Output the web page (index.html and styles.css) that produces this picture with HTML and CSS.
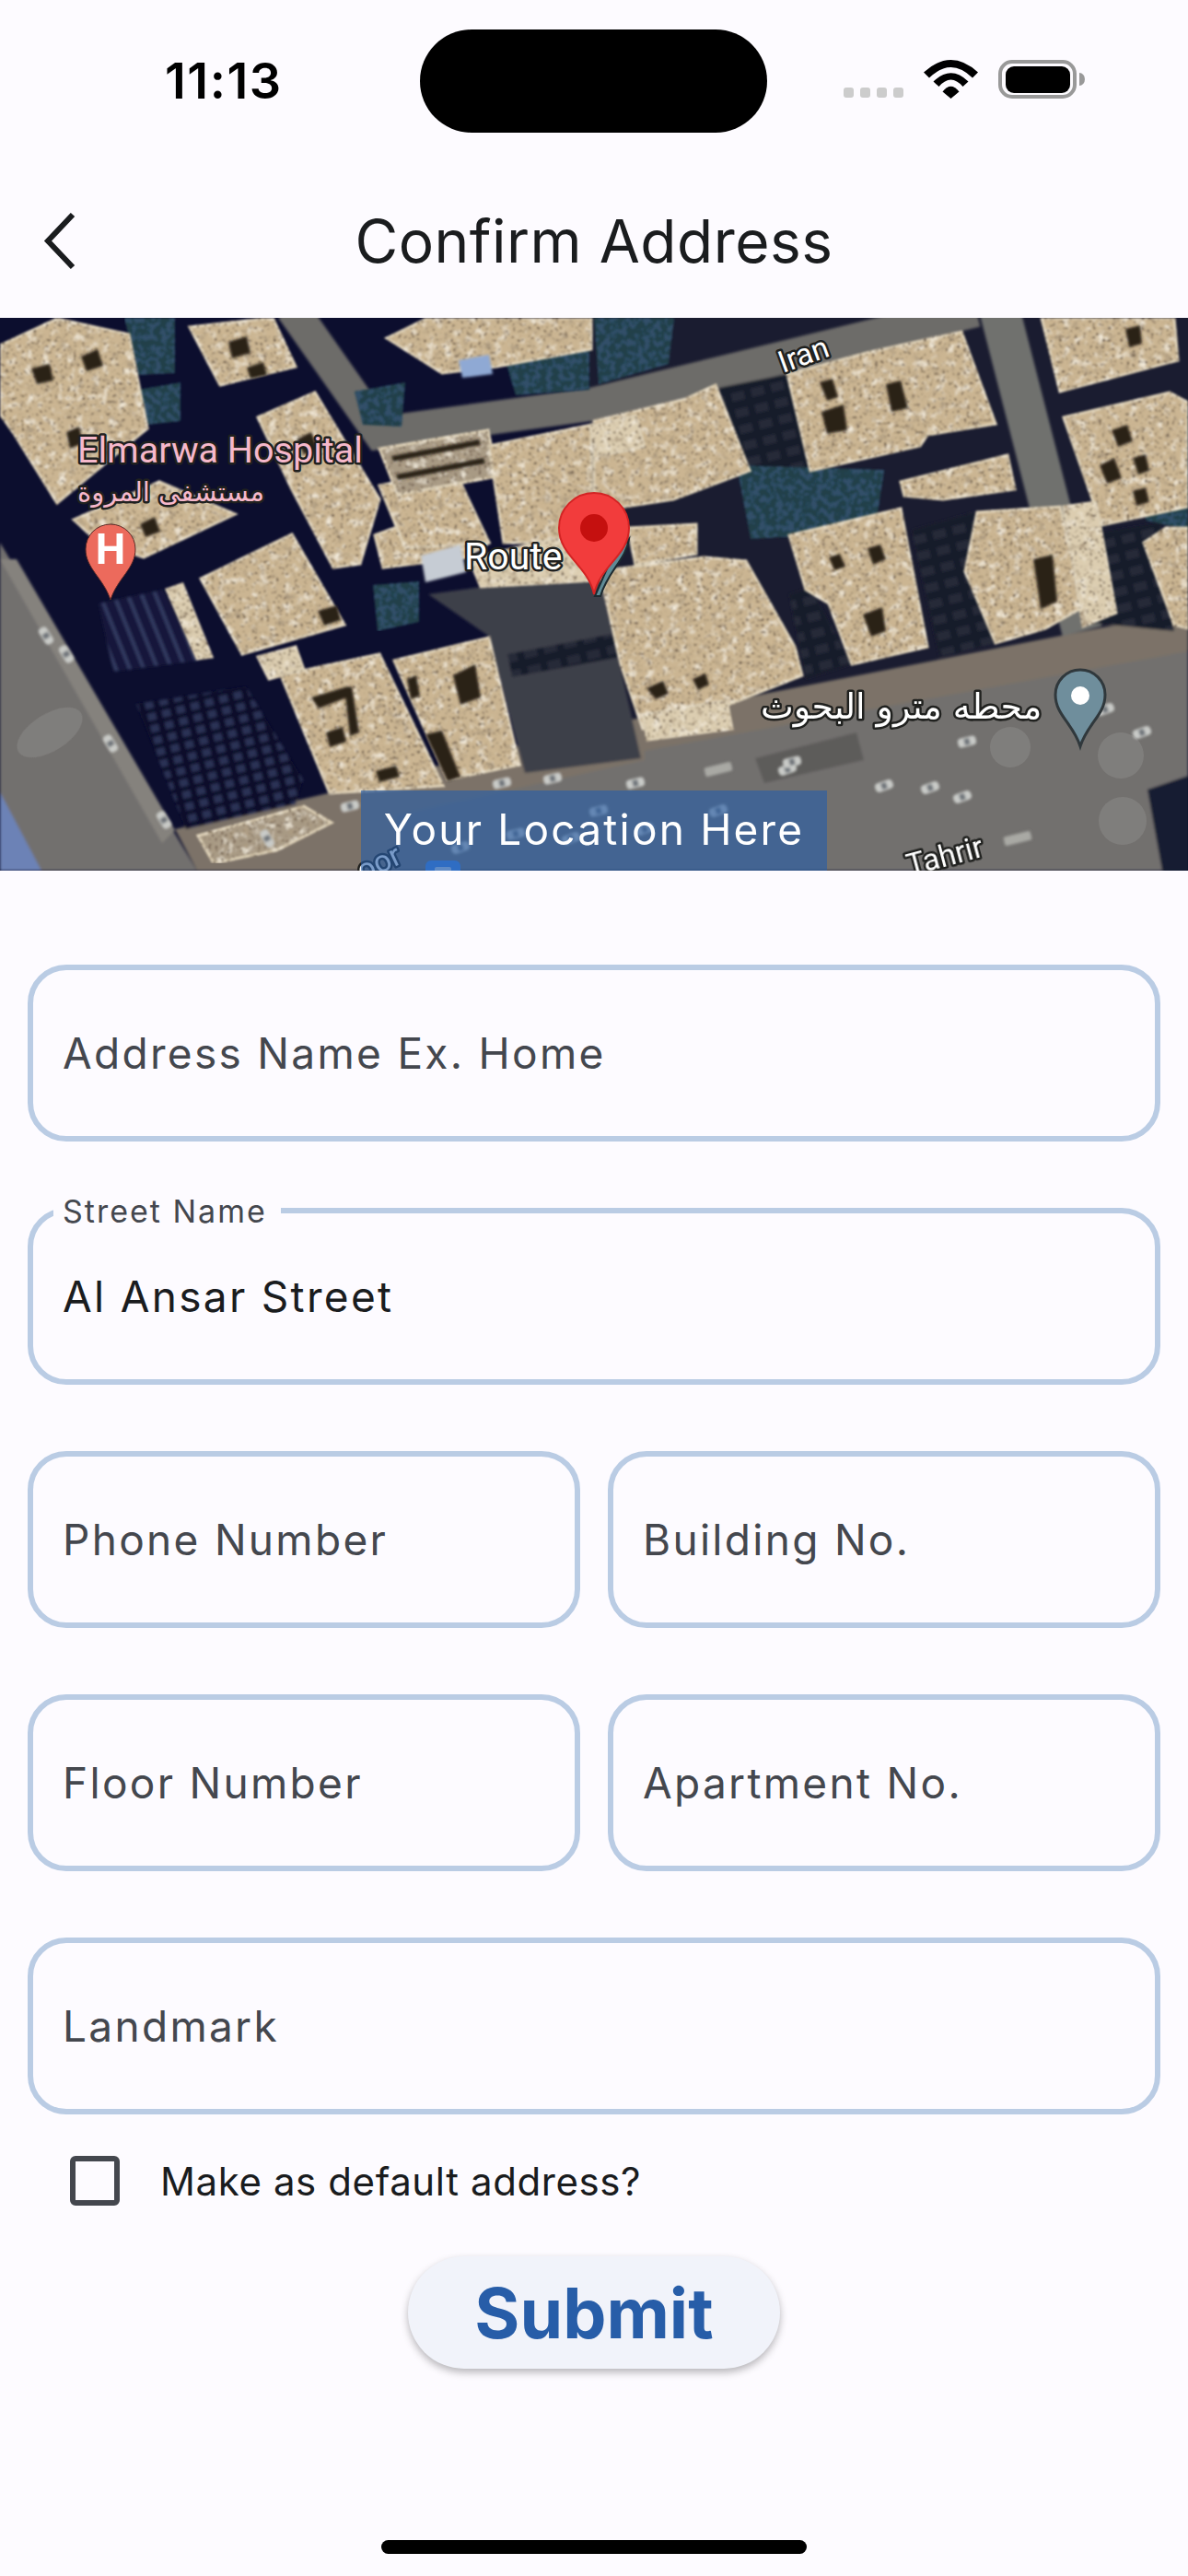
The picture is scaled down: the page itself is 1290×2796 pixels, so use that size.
FILE: index.html
```html
<!DOCTYPE html>
<html lang="en">
<head>
<meta charset="utf-8">
<title>Confirm Address</title>
<link rel="stylesheet" href="styles.css">
</head>
<body>
<main class="screen">
  <header class="status">
    <div class="time">11:13</div>
    <div class="island"></div>
    <div class="status-icons">
      <div class="signal"><i></i><i></i><i></i><i></i></div>
      <svg class="wifi" width="59" height="42" viewBox="0 0 59 42"><path d="M0 13.5Q29.5-13.5 59 13.5L53 19.5Q29.5-3.500 6 19.5Z"/><path d="M10.500 23.500Q29.500 5 48.500 23.500L42.500 29Q29.500 14 16.500 29Z"/><path d="M20.500 34.500Q29.500 23 38.500 34.500L29.500 42Z"/></svg>
      <svg class="battery" width="94" height="42" viewBox="0 0 94 42"><rect x="2" y="2" width="81" height="38" rx="13" class="bat-line"/><rect x="8" y="7" width="70" height="29" rx="9"/><path class="bat-cap" d="M88 14a6 7 0 0 1 6 7a6 7 0 0 1-6 7Z"/></svg>
    </div>
  </header>

  <nav class="bar">
    <svg class="back" width="40" height="62" viewBox="0 0 40 62"><path d="M33 2 6 30.500 33 59" class="back-line"/></svg>
    <h1 class="title">Confirm Address</h1>
    <span></span>
  </nav>

  <section class="map">
    <svg class="map-art" width="1290" height="600" viewBox="0 0 1290 600">
      <defs>
        <filter id="roofTex" x="0" y="0" width="100%" height="100%">
          <feTurbulence type="fractalNoise" baseFrequency="0.11" numOctaves="4" seed="7" result="n"/>
          <feColorMatrix in="n" type="matrix" values="0 0 0 0 .42 0 0 0 0 .33 0 0 0 0 .22 4 0 0 0 -2.300" result="dark"/>
          <feComposite in="dark" in2="SourceGraphic" operator="in" result="shade"/>
          <feColorMatrix in="n" type="matrix" values="0 0 0 0 .9 0 0 0 0 .84 0 0 0 0 .72 0 3 0 0 -1.600" result="light"/>
          <feComposite in="light" in2="SourceGraphic" operator="in" result="glow"/>
          <feTurbulence type="fractalNoise" baseFrequency="0.3" numOctaves="2" seed="11" result="f"/>
          <feColorMatrix in="f" type="matrix" values="0 0 0 0 .16 0 0 0 0 .11 0 0 0 0 .07 16 0 0 0 -10.200" result="specks"/>
          <feComposite in="specks" in2="SourceGraphic" operator="in" result="dots"/>
          <feMerge result="m"><feMergeNode in="SourceGraphic"/><feMergeNode in="glow"/><feMergeNode in="shade"/><feMergeNode in="dots"/></feMerge>
          <feGaussianBlur in="m" stdDeviation="0.9"/>
        </filter>
        <filter id="soft"><feGaussianBlur stdDeviation="1.400"/></filter>
        <filter id="leaf" x="0" y="0" width="100%" height="100%">
          <feTurbulence type="fractalNoise" baseFrequency="0.16" numOctaves="3" seed="3" result="n"/>
          <feColorMatrix in="n" type="matrix" values="0 0 0 0 .03 0 0 0 0 .08 0 0 0 0 .14 9 0 0 0 -4.200" result="d"/>
          <feComposite in="d" in2="SourceGraphic" operator="in" result="s"/>
          <feMerge result="t"><feMergeNode in="SourceGraphic"/><feMergeNode in="s"/></feMerge>
          <feGaussianBlur in="t" stdDeviation="1"/>
        </filter>
        <pattern id="glassA" width="14" height="14" patternUnits="userSpaceOnUse" patternTransform="rotate(-22)"><rect width="14" height="14" fill="#12163a"/><rect width="4" height="14" fill="#333a60"/></pattern>
        <pattern id="glassB" width="16" height="13" patternUnits="userSpaceOnUse" patternTransform="rotate(-14)"><rect width="16" height="13" fill="#0c0f2c"/><rect y="1" width="9" height="8" x="3" fill="#2c3254"/></pattern>
        <pattern id="glassC" width="22" height="18" patternUnits="userSpaceOnUse" patternTransform="rotate(-14)"><rect width="22" height="18" fill="#191c2c"/><rect x="2" y="2" width="14" height="9" fill="#282b38"/></pattern>
        <g id="car"><rect x="-10" y="-5" width="20" height="10" rx="4" fill="#c9cbc8"/><rect x="-3" y="-3.500" width="6" height="7" fill="#70757a"/></g>
        <g id="van"><rect x="-15" y="-5" width="30" height="10" rx="2" fill="#a9a9a4"/></g>
      </defs>

      <rect width="1290" height="600" fill="#0c0e2e"/>
      <polygon class="shade-right" points="640,0 1290,0 1290,360 640,470"/>

      <g filter="url(#soft)">
        <polygon class="asphalt" points="0,244 214,600 0,600"/>
        <polygon class="curb" points="0,262 18,262 190,556 176,570"/>
        <polygon class="asphalt-dark" points="0,515 45,600 0,600"/>
        <polygon class="pave" points="214,600 190,555 360,515 640,445 1290,318 1290,600"/>
        <polygon class="asphalt" points="700,470 1290,362 1290,600 700,600"/>
        <polygon class="asphalt" points="430,540 700,480 700,600 430,600"/>
        <polygon class="strip" points="820,478 930,450 938,480 830,505"/>
        <polygon class="corner" points="1246,512 1290,497 1290,600 1262,600"/>
        <polyline class="road" points="317,-10 412,125 642,94 777,61 1060,-8"/>
        <polyline class="road road-r" points="1085,-10 1175,340"/>
        <polygon class="gloom" points="465,300 650,275 696,478 570,494 530,345"/>
        <polygon fill="url(#glassC)" points="551,365 690,338 696,364 556,390"/>
        <polygon fill="url(#glassC)" points="780,76 855,61 880,166 814,166"/>
        <polygon fill="url(#glassC)" points="857,300 880,292 925,376 875,392"/>
        <polygon fill="url(#glassC)" points="990,230 1060,210 1048,275 1081,353 1020,368"/>
        <polygon fill="url(#glassC)" points="1198,232 1260,222 1275,340 1176,330"/>
        <polygon fill="url(#glassA)" points="107,310 177,295 214,372 123,384"/>
        <polygon fill="url(#glassB)" points="148,419 267,400 329,501 321,528 202,555"/>
      </g>

      <g filter="url(#leaf)">
        <polygon class="tree" points="135,0 190,0 190,60 150,62"/>
        <polygon class="tree" points="150,78 196,70 196,112 160,116"/>
        <polygon class="tree" points="385,80 440,70 436,118 394,116"/>
        <polygon class="tree" points="548,44 640,30 640,78 560,84"/>
        <polygon class="tree" points="645,0 732,0 726,50 650,72"/>
        <polygon class="tree" points="800,160 960,165 950,232 815,240"/>
        <polygon class="tree" points="1215,130 1290,95 1290,230 1245,220"/>
        <polygon class="tree" points="405,290 455,286 455,330 410,340"/>
      </g>

      <g filter="url(#roofTex)">
        <polygon class="roof" points="0,30 62,1 140,18 160,120 62,201 16,127 0,104"/>
        <polygon class="roof" points="80,219 173,178 255,213 156,260 107,244"/>
        <polygon class="roof" points="206,10 296,0 321,53 239,73"/>
        <polygon class="roof" points="280,108 342,81 412,197 391,267 362,271 317,186"/>
        <polygon class="roof" points="218,283 317,235 374,333 263,365"/>
        <polygon class="roof pale" points="181,295 198,289 230,368 214,370"/>
        <polygon class="roof pale" points="280,368 321,357 330,382 292,392"/>
        <polygon class="roof" points="305,388 412,365 481,508 358,516"/>
        <polygon class="roof" points="428,372 531,347 564,485 486,501 461,446"/>
        <polygon class="roof" points="407,236 502,201 531,244 506,260 416,271"/>
        <polygon class="roof" points="412,182 494,166 531,244 440,250"/>
        <polygon class="roof stone" points="412,142 530,122 540,172 432,192"/>
        <polygon class="roof" points="420,22 465,0 642,0 642,34 539,53 480,60"/>
        <polygon class="roof" points="531,139 642,116 642,244 547,244"/>
        <polygon class="roof pale" points="510,262 600,240 645,246 645,285 522,292"/>
        <polygon class="roof stone" points="215,562 330,530 360,548 300,578 232,592"/>
        <polygon class="roof" points="645,112 744,88 777,73 814,166 731,197 645,210"/>
        <polygon class="roof" points="855,61 941,38 1044,15 1081,115 1007,127 999,139 880,166"/>
        <polygon class="roof" points="1131,0 1275,0 1279,46 1151,80"/>
        <polygon class="roof" points="1155,108 1270,81 1290,92 1290,205 1196,225"/>
        <polygon class="roof" points="978,178 1094,149 1102,186 1024,197 982,193"/>
        <polygon class="roof" points="857,236 978,207 1007,357 925,376 900,310 875,295"/>
        <polygon class="roof" points="1048,275 1061,211 1151,205 1176,314 1135,337 1081,353"/>
        <polygon class="roof" points="1242,244 1266,228 1290,228 1290,337 1275,333"/>
        <polygon class="roof" points="651,275 764,260 810,264 863,357 871,388 793,419 698,446 674,376"/>
        <polygon class="roof" points="682,228 756,224 756,256 690,268"/>
        <polygon class="roof pale" points="698,431 789,415 795,446 703,458"/>
        <polygon class="roof pale" points="1155,205 1190,200 1212,320 1176,335"/>
        <polygon class="roof pale" points="640,118 690,106 700,140 650,150"/>
      </g>

      <polygon class="metal" points="457,258 500,246 506,276 462,287" filter="url(#soft)"/>

      <g filter="url(#soft)" class="holes">
        <polygon points="34,55 54,50 58,68 40,72"/><polygon points="88,42 106,34 112,52 94,58"/>
        <polygon points="72,124 86,118 90,136 76,142"/><polygon points="248,26 268,20 272,38 252,44"/>
        <polygon points="268,54 286,48 290,62 272,66"/><polygon points="152,224 168,216 174,232 158,238"/>
        <polygon points="322,132 338,124 346,144 330,148"/><polygon points="345,318 366,312 370,328 352,334"/>
        <polygon points="338,412 378,400 382,410 346,424"/><polygon points="354,450 372,444 376,460 358,466"/>
        <polygon points="374,402 382,400 390,450 380,454"/><polygon points="442,392 452,388 456,410 446,414"/>
        <polygon points="492,388 516,376 522,412 500,420"/><polygon points="462,452 480,448 500,498 486,503"/>
        <polygon points="408,492 430,486 434,498 412,504"/><polygon points="890,70 904,66 910,86 898,90"/>
        <polygon points="892,102 916,94 920,122 898,126"/><polygon points="962,72 978,68 986,98 968,102"/>
        <polygon points="1222,12 1238,8 1240,28 1226,32"/><polygon points="1207,122 1224,116 1230,134 1214,140"/>
        <polygon points="1194,160 1210,152 1218,174 1202,180"/><polygon points="1230,152 1244,148 1248,166 1236,170"/>
        <polygon points="1230,188 1244,184 1248,200 1234,204"/><polygon points="900,260 912,256 918,270 906,274"/>
        <polygon points="942,250 956,246 962,262 948,268"/><polygon points="937,322 958,314 962,340 946,346"/>
        <polygon points="1122,262 1143,257 1148,308 1130,316"/><polygon points="702,402 720,394 726,408 712,414"/>
        <polygon points="752,392 766,386 770,398 758,404"/><polygon points="425,150 520,132 522,138 427,156"/>
        <polygon points="430,170 525,152 527,158 432,176"/>
      </g>

      <polygon class="pool" points="498,46 531,40 535,61 502,65" filter="url(#soft)"/>

      <g class="traffic" filter="url(#soft)">
        <use href="#car" transform="translate(72 365) rotate(58)"/><use href="#car" transform="translate(50 345) rotate(58)"/>
        <use href="#car" transform="translate(120 462) rotate(58)"/><use href="#car" transform="translate(178 545) rotate(58)"/>
        <use href="#car" transform="translate(960 508) rotate(-20)"/><use href="#car" transform="translate(1010 510) rotate(-20)"/>
        <use href="#car" transform="translate(1045 520) rotate(-20)"/><use href="#car" transform="translate(1200 425) rotate(-20)"/>
        <use href="#car" transform="translate(1240 450) rotate(-20)"/><use href="#car" transform="translate(855 490) rotate(-20)"/>
        <use href="#car" transform="translate(1050 460) rotate(-14)"/><use href="#car" transform="translate(860 482) rotate(-14)"/>
        <use href="#van" transform="translate(780 490) rotate(-14)"/><use href="#car" transform="translate(690 505) rotate(-14)"/>
        <use href="#car" transform="translate(545 505) rotate(-14)"/><use href="#car" transform="translate(600 500) rotate(-14)"/>
        <use href="#car" transform="translate(650 535) rotate(-14)"/><use href="#car" transform="translate(560 560) rotate(-14)"/>
        <use href="#car" transform="translate(620 565) rotate(-20)"/><use href="#car" transform="translate(700 555) rotate(-20)"/>
        <use href="#car" transform="translate(780 535) rotate(-20)"/><use href="#car" transform="translate(500 575) rotate(-20)"/>
        <use href="#van" transform="translate(1105 565) rotate(-14)"/>
        <use href="#car" transform="translate(380 530) rotate(-14)"/><use href="#car" transform="translate(290 565) rotate(60)"/>
      </g>

      <g class="blobs">
        <ellipse cx="54" cy="450" rx="40" ry="20" transform="rotate(-32 54 450)"/>
        <circle cx="1097" cy="466" r="22"/><circle cx="1217" cy="475" r="25"/><circle cx="1219" cy="546" r="26"/>
      </g>

      <text class="lbl pink en" x="84" y="157">Elmarwa Hospital</text>
      <text class="lbl pink ar-s" x="84" y="199">مستشفى المروة</text>
      <text class="lbl en route" x="504" y="273">Route</text>
      <text class="lbl en small" transform="translate(850 60) rotate(-20)">Iran</text>
      <text class="lbl ar" x="826" y="435">محطه مترو البحوث</text>
      <text class="lbl en small" transform="translate(988 606) rotate(-15)">Tahrir</text>
      <text class="lbl en small" transform="translate(394 612) rotate(-25)">oor</text>
      <rect class="transit" x="462" y="589" width="38" height="30" rx="6"/>
      <rect class="transit-in" x="472" y="596" width="18" height="12" rx="2"/>

      <g class="pin-h">
        <path class="pin-h-body" d="M120 306C112 282 93 272 93 251a27 27 0 0 1 54 0C147 272 128 282 120 306Z"/>
        <text class="pin-h-text" x="120" y="267">H</text>
      </g>
      <g>
        <path class="pin-g" d="M1173 465C1165 440 1146 431 1146 409a27 27 0 0 1 54 0C1200 431 1181 440 1173 465Z"/>
        <circle class="pin-g-dot" cx="1173" cy="410" r="10"/>
      </g>
      <g>
        <path class="pin-shadow" d="M683 240C680 262 660 275 652 302L646 302 660 270Z"/>
        <path class="pin-red" d="M645 300C638 268 607 258 607 228a38 38 0 0 1 76 0C683 258 652 268 645 300Z"/>
        <circle class="pin-dot" cx="645" cy="228" r="15"/>
      </g>
    </svg>
    <div class="map-tag">
      <span class="map-tag-text">Your Location Here</span>
    </div>
  </section>

  <form class="form">
    <div class="rows">
      <div class="field"><span class="hint">Address Name Ex. Home</span></div>
      <div class="field"><span class="field-label">Street Name</span><span class="value">Al Ansar Street</span></div>
      <div class="pair">
        <div class="field"><span class="hint">Phone Number</span></div>
        <div class="field"><span class="hint">Building No.</span></div>
      </div>
      <div class="pair">
        <div class="field"><span class="hint">Floor Number</span></div>
        <div class="field"><span class="hint">Apartment No.</span></div>
      </div>
      <div class="field"><span class="hint">Landmark</span></div>
    </div>
    <div class="check-row">
      <span class="check"></span>
      <span class="check-text">Make as default address?</span>
    </div>
    <button type="button" class="submit">Submit</button>
  </form>

  <div class="home"></div>
</main>
</body>
</html>
```
FILE: styles.css
```css
* { box-sizing: border-box; }
html, body { margin: 0; padding: 0; }
body { background: #fdfbff; font-family: Inter, "Liberation Sans", sans-serif; color: #1a1c1e; }

.screen { width: 1290px; height: 2796px; display: flex; flex-direction: column; overflow: hidden; }

/* status bar */
.status { display: grid; grid-template-columns: 456px 377px 1fr; height: 144px; padding-top: 32px; }
.time { padding-left: 179px; font-size: 54px; font-weight: 600; letter-spacing: 1.5px; line-height: 112px; color: #000; }
.island { background: #000; border-radius: 56px; height: 112px; }
.status-icons { display: flex; align-items: flex-end; padding: 0 0 5px 83px; height: 80px; }
.signal { display: flex; gap: 7px; margin-bottom: 1px; }
.signal i { width: 11px; height: 11px; border-radius: 3px; background: #cccccc; }
.wifi { margin-left: 22px; }
.battery { margin-left: 22px; }
.bat-line { fill: none; stroke: #999999; stroke-width: 4; }
.bat-cap { fill: #999999; }

/* nav */
.bar { display: grid; grid-template-columns: 1fr auto 1fr; align-items: center; height: 201px; padding-top: 34px; }
.back { margin-left: 46px; }
.back-line { fill: none; stroke: #1a1c1e; stroke-width: 6; }
.title { margin: 0; font-size: 64px; font-weight: 400; letter-spacing: 0.5px; line-height: 80px; color: #1a1c1e; }

/* map */
.map { position: relative; height: 600px; overflow: hidden; }
.map-art { display: block; }
.shade-right { fill: #1a1c30; }
.asphalt { fill: #72706e; }
.curb { fill: #85827d; }
.asphalt-dark { fill: #6c82b6; }
.pave { fill: #7b7268; }
.strip { fill: #5d5c5a; }
.corner { fill: #141a30; }
.road { fill: none; stroke: #6d6c69; stroke-width: 36; }
.road-r { stroke: #70716e; stroke-width: 44; }
.gloom { fill: #3e3f4a; }
.tree { fill: #24404a; }
.roof { fill: #cbb592; stroke: #dccfb5; stroke-width: 3; }
.pale { fill: #dccdb0; }
.stone { fill: #a89a84; }
.metal { fill: #c6ccd4; }
.holes polygon { fill: #2a2018; }
.pool { fill: #8fa9d4; }
.blobs { fill: #ffffff; opacity: 0.1; }
.transit { fill: #3d86f0; }
.transit-in { fill: #b9d2f5; }
.lbl { fill: #ffffff; stroke: #20211f; stroke-width: 5; paint-order: stroke; stroke-linejoin: round; }
.en { font-family: Roboto, "Liberation Sans", sans-serif; font-size: 39.5px; }
.route { font-size: 41px; }
.small { font-size: 33px; }
.ar { font-family: "DejaVu Sans", sans-serif; font-size: 38px; }
.ar-s { font-family: "DejaVu Sans", sans-serif; font-size: 29px; }
.pink { fill: #f6b8cb; }
.pin-h-body { fill: #ec6a5c; stroke: #5a2a26; stroke-width: 1; }
.pin-h-text { fill: #ffffff; font-family: Roboto, "Liberation Sans", sans-serif; font-weight: 700; font-size: 46px; text-anchor: middle; }
.pin-g { fill: #6f8e9c; stroke: #30383c; stroke-width: 3; }
.pin-g-dot { fill: #ffffff; }
.pin-shadow { fill: #5f8b96; stroke: #1d2a30; stroke-width: 2; }
.pin-red { fill: #f23c3c; stroke: #d32424; stroke-width: 2; }
.pin-dot { fill: #c5100f; }

.map-tag { position: absolute; left: 392px; bottom: 0; width: 506px; height: 87px; background: rgba(39, 93, 168, 0.62); display: flex; justify-content: center; padding-top: 12px; }
.map-tag-text { color: #ffffff; font-size: 46px; letter-spacing: 2.2px; line-height: 60px; }

/* form */
.form { display: flex; flex-direction: column; padding: 102px 30px 0; }
.rows { display: flex; flex-direction: column; gap: 72px; }
.pair { display: grid; grid-template-columns: 1fr 1fr; gap: 30px; }
.field { position: relative; height: 192px; border: 6px solid #bacce4; border-radius: 42px; display: flex; align-items: center; padding-left: 32px; font-size: 46px; letter-spacing: 2.3px; }
.hint { color: #44474e; }
.value { color: #1a1c1e; }
.field-label { position: absolute; left: 22px; top: -22px; padding: 0 15px 0 10px; background: #fdfbff; color: #44474e; font-size: 34px; letter-spacing: 2px; line-height: 40px; }

.check-row { display: flex; align-items: center; gap: 44px; margin: 45px 0 0 46px; }
.check { width: 54px; height: 54px; border: 6px solid #44474e; border-radius: 6px; }
.check-text { font-size: 42px; letter-spacing: 0.6px; color: #1a1c1e; }

.submit { align-self: center; margin-top: 55px; width: 404px; height: 122px; border: 0; border-radius: 61px; background: #f1f3fa; color: #275da8; font-family: Inter, "Liberation Sans", sans-serif; font-size: 75px; font-weight: 700; box-shadow: 0 4px 8px rgba(0, 0, 0, 0.28); padding: 0; }

.home { width: 462px; height: 15px; border-radius: 8px; background: #000; margin: auto auto 24px; }
```
